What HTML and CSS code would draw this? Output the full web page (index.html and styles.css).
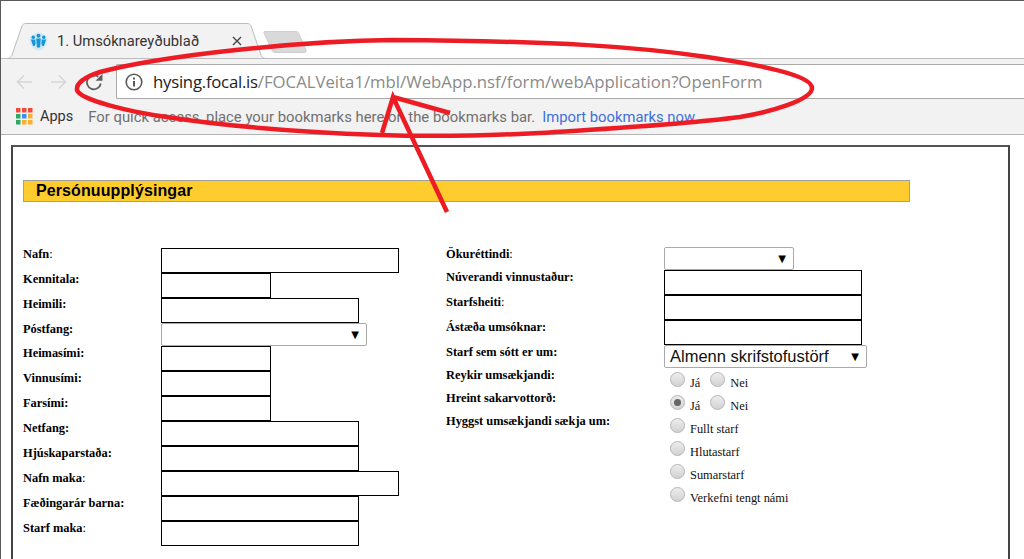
FILE: index.html
```html
<!DOCTYPE html>
<html lang="is">
<head>
<meta charset="utf-8">
<title>Umsóknareyðublað</title>
<link rel="stylesheet" href="styles.css">
</head>
<body>
<div class="window">
  <div class="tabstrip">
    <div class="tab">
      <svg class="tab-shape" width="260" height="36" viewBox="0 0 260 36"><path d="M0 35.500C3 35.500 4 34 5 32L15 3C16 1 17 .5 19 .5H240C242 .5 243 1 244 3L254 32C255 34 256 35.500 260 35.500Z" fill="#f2f2f2" stroke="#bcbcbc"/></svg>
      <svg class="favicon" width="19" height="19" viewBox="0 0 19 19"><path d="M9.500 .5C13 .5 14 2 15 3C17.500 3 18.500 5 18.500 7C18.500 12 15 18.500 9.500 18.500C4 18.500 .5 12 .5 7C.5 5 1.500 3 4 3C5 2 6 .5 9.500 .5Z" fill="#d4e8f2"/><g fill="#1496dc"><circle cx="9.500" cy="3.800" r="2"/><path d="M7.200 6.500h4.600l-.7 9h-3.200z"/><circle cx="4.300" cy="5.300" r="1.700"/><path d="M1.800 7.500h4.400l.4 4-.9 2.500H4.200z"/><circle cx="14.700" cy="5.300" r="1.700"/><path d="M12.800 7.500h4.400l-2.400 6.500h-1.500l-.9-2.500z"/></g></svg>
      <span class="tab-title">1. Umsóknareyðublað</span>
      <svg class="tab-close" width="10" height="10" viewBox="0 0 10 10"><path d="M1 1l8 8M9 1l-8 8" stroke="#444" stroke-width="1.400" fill="none"/></svg>
    </div>
    <svg class="newtab" width="44" height="22" viewBox="0 0 44 22"><path d="M1 2C.5 1 1 .5 2 .5H33C34 .5 35 1 35.500 2L43 19C43.500 20.500 43 21.500 41.500 21.500H12C11 21.500 10 21 9.500 20Z" fill="#d9d9d9" stroke="#cfcfcf"/></svg>
  </div>
  <div class="toolbar">
    <svg class="nav-icon nav-back" width="16" height="16" viewBox="0 0 16 16"><path d="M16 8H1.500M8 1.500L1.500 8 8 14.500" stroke="#d6d6d6" stroke-width="1.600" fill="none"/></svg>
    <svg class="nav-icon nav-forward" width="16" height="16" viewBox="0 0 16 16"><path d="M0 8h14.500M8 1.500L14.500 8 8 14.500" stroke="#d6d6d6" stroke-width="1.600" fill="none"/></svg>
    <svg class="nav-icon nav-reload" width="18" height="18" viewBox="0 0 18 18"><path d="M15.800 10.500A7 7 0 1 1 13.300 3.800" stroke="#5f5f5f" stroke-width="1.800" fill="none"/><path d="M10.500 7.800h7V.8z" fill="#5f5f5f"/></svg>
    <div class="omnibox">
      <svg width="18" height="18" viewBox="0 0 18 18"><circle cx="9" cy="9" r="7.800" stroke="#5a5a5a" stroke-width="1.600" fill="none"/><path d="M8 8h2v5.500H8zM8 4.500h2v2H8z" fill="#5a5a5a"/></svg>
      <span class="url"><span class="host">hysing.focal.is</span>/FOCALVeita1/mbl/WebApp.nsf/form/webApplication?OpenForm</span>
    </div>
  </div>
  <div class="bookmarks">
    <svg width="17" height="17" viewBox="0 0 17 17"><rect x="0" y="0" width="4.500" height="4.500" fill="#f04b3f"/><rect x="6" y="0" width="4.500" height="4.500" fill="#f04b3f"/><rect x="12" y="0" width="4.500" height="4.500" fill="#f04b3f"/><rect x="0" y="6" width="4.500" height="4.500" fill="#2fa866"/><rect x="6" y="6" width="4.500" height="4.500" fill="#3b8ff3"/><rect x="12" y="6" width="4.500" height="4.500" fill="#fbb02d"/><rect x="0" y="12" width="4.500" height="4.500" fill="#2fa866"/><rect x="6" y="12" width="4.500" height="4.500" fill="#fbb02d"/><rect x="12" y="12" width="4.500" height="4.500" fill="#fbb02d"/></svg>
    <span class="apps">Apps</span>
    <span class="hint">For quick access, place your bookmarks here on the bookmarks bar.</span>
    <span class="import">Import bookmarks now...</span>
  </div>
  <div class="page">
    <div class="formbox">
      <h1 class="section">Persónuupplýsingar</h1>
      <div class="columns">
        <div class="col col-left">
          <div class="row up"><span class="lbl">Nafn<i>:</i></span><div class="inp w-l"></div></div>
          <div class="row up"><span class="lbl">Kennitala:</span><div class="inp w-s"></div></div>
          <div class="row up"><span class="lbl">Heimili:</span><div class="inp w-m"></div></div>
          <div class="row row-sel up"><span class="lbl">Póstfang:</span><div class="sel w-sel1"><span class="arrow">▼</span></div></div>
          <div class="row"><span class="lbl">Heimasími:</span><div class="inp w-s"></div></div>
          <div class="row"><span class="lbl">Vinnusími:</span><div class="inp w-s"></div></div>
          <div class="row"><span class="lbl">Farsími:</span><div class="inp w-s"></div></div>
          <div class="row"><span class="lbl">Netfang:</span><div class="inp w-m"></div></div>
          <div class="row"><span class="lbl">Hjúskaparstaða:</span><div class="inp w-m"></div></div>
          <div class="row"><span class="lbl">Nafn maka<i>:</i></span><div class="inp w-l"></div></div>
          <div class="row"><span class="lbl">Fæðingarár barna:</span><div class="inp w-m"></div></div>
          <div class="row"><span class="lbl">Starf maka<i>:</i></span><div class="inp w-m"></div></div>
        </div>
        <div class="col col-right">
          <div class="row row-sel"><span class="lbl">Ökuréttindi<i>:</i></span><div class="sel w-sel2"><span class="arrow">▼</span></div></div>
          <div class="row"><span class="lbl">Núverandi vinnustaður:</span><div class="inp w-m"></div></div>
          <div class="row"><span class="lbl">Starfsheiti<i>:</i></span><div class="inp w-m"></div></div>
          <div class="row"><span class="lbl">Ástæða umsóknar:</span><div class="inp w-m"></div></div>
          <div class="row row-sel"><span class="lbl">Starf sem sótt er um:</span><div class="sel w-sel3"><span class="seltext">Almenn skrifstofustörf</span><span class="arrow">▼</span></div></div>
          <div class="row row-sel"><span class="lbl">Reykir umsækjandi:</span><div class="radios"><span class="radio"></span><span class="rt">Já</span><span class="radio"></span><span class="rt">Nei</span></div></div>
          <div class="row row-sel"><span class="lbl">Hreint sakarvottorð:</span><div class="radios"><span class="radio on"></span><span class="rt">Já</span><span class="radio"></span><span class="rt">Nei</span></div></div>
          <div class="row row-sel"><span class="lbl">Hyggst umsækjandi sækja um:</span><div class="radios"><span class="radio"></span><span class="rt">Fullt starf</span></div></div>
          <div class="row row-sel"><span class="lbl"></span><div class="radios"><span class="radio"></span><span class="rt">Hlutastarf</span></div></div>
          <div class="row row-sel"><span class="lbl"></span><div class="radios"><span class="radio"></span><span class="rt">Sumarstarf</span></div></div>
          <div class="row row-sel"><span class="lbl"></span><div class="radios"><span class="radio"></span><span class="rt">Verkefni tengt námi</span></div></div>
        </div>
      </div>
    </div>
  </div>
  <svg class="annotation" width="1024" height="559" viewBox="0 0 1024 559">
    <path d="M393 40C300 41 165 55 100 72C85 77 76 83 77 90C80 100 130 112 167 117C230 127 300 132 380 135C440 137 500 135 540 133C600 129 680 125 740 117C770 112 812 100 812 88C812 78 780 68 707 57C640 47 560 41 393 40Z" fill="none" stroke="#ed1c24" stroke-width="4.500"/>
    <path d="M382 133L393 97L447 212M393 97L450 113" fill="none" stroke="#ed1c24" stroke-width="4.500"/>
  </svg>
</div>
</body>
</html>
```
FILE: styles.css
```css
* { box-sizing: border-box; }
html, body { margin: 0; padding: 0; }
body { width: 1024px; height: 559px; overflow: hidden; background: #fff; font-family: "Liberation Serif", serif; }
.window { position: relative; width: 1024px; height: 559px; display: flex; flex-direction: column; border-top: 1px solid #5a5a5a; border-left: 1px solid #5a5a5a; overflow: hidden; }
.tabstrip { flex: none; height: 57px; background: #fff; display: flex; align-items: flex-end; padding-left: 6px; }
.tab { position: relative; width: 260px; height: 36px; display: flex; align-items: center; padding: 0 0 0 22px; margin-bottom: -1px; font: 14.700px "Roboto", sans-serif; color: #333; z-index: 1; }
.tab-shape { position: absolute; left: 0; top: 0; }
.favicon, .tab-title, .tab-close { position: relative; }
.favicon { flex: none; }
.tab-title { margin-left: 9px; width: 161px; white-space: nowrap; }
.tab-close { flex: none; margin-left: 14px; }
.newtab { flex: none; margin: 0 0 5px -4px; }
.toolbar { flex: none; height: 41px; background: #f2f2f2; border-top: 1px solid #bcbcbc; display: flex; align-items: center; padding: 5px 0 0 15px; }
.nav-icon { flex: none; }
.nav-forward { margin-left: 19px; }
.nav-reload { margin-left: 18px; }
.omnibox { flex: 1; height: 35px; margin-left: 13px; background: #fff; border: 1px solid #a9a9a9; border-right: none; border-radius: 2px 0 0 2px; display: flex; align-items: center; padding-left: 8px; gap: 10px; font: 16.750px "Open Sans", sans-serif; color: #8a8a8a; white-space: nowrap; }
.host { color: #222; letter-spacing: -.25px; }
.bookmarks { flex: none; height: 36px; background: #f2f2f2; border-bottom: 1px solid #b4b4b4; display: flex; align-items: center; padding-left: 15px; font: 14.500px "Roboto", sans-serif; white-space: nowrap; }
.apps { margin-left: 7px; color: #333; }
.hint { margin-left: 15px; color: #707070; font-size: 14.850px; }
.import { margin-left: 7px; color: #3f6fdc; font-size: 14.800px; }
.page { flex: 1; min-height: 0; padding: 10px 0 0 10px; background: #fff; }
.formbox { width: 999px; height: 420px; border: 2px solid #444; border-top-color: #555; border-bottom: none; padding: 33px 0 0 10px; }
.section { width: 887px; height: 22px; margin: 0; padding-left: 12px; background: #ffcc2e; border: 1px solid #a0a0a0; font: bold 16px/20px "Liberation Sans", sans-serif; letter-spacing: .1px; color: #000; }
.columns { display: flex; margin-top: 45px; }
.col { display: flex; flex-direction: column; }
.col-left { width: 423px; margin-top: 1px; }
.row { display: flex; flex: none; height: 25px; }
.row-sel { height: 23px; }
.lbl { width: 138px; flex: none; font: bold 12.400px/14px "Liberation Serif", serif; color: #000; }
.up .lbl { margin-top: -1px; }
.lbl i { font-style: normal; font-weight: normal; }
.col-right .lbl { width: 218px; }
.inp { height: 25px; border: 1px solid #000; background: #fff; }
.w-l { width: 238px; } .w-m { width: 198px; } .w-s { width: 110px; }
.sel { height: 23px; border: 1px solid #a9a9a9; border-radius: 2px; background: #fff; display: flex; align-items: center; padding: 0 7px 0 5px; }
.w-sel1 { width: 206px; } .w-sel2 { width: 130px; } .w-sel3 { width: 203px; }
.arrow { font: 10px "DejaVu Sans", sans-serif; color: #000; margin-left: auto; }
.seltext { font: 16.500px "Liberation Sans", sans-serif; color: #111; }
.radios { display: flex; align-items: flex-start; padding: 4px 0 0 6px; }
.radio { width: 15px; height: 15px; border-radius: 50%; border: 1px solid #b5b5b5; background: linear-gradient(#ededed, #d2d2d2); position: relative; flex: none; margin-right: 5px; }
.radio.on::after { content: ""; position: absolute; left: 3px; top: 3px; width: 7px; height: 7px; border-radius: 50%; background: #666; }
.rt { font: 12.400px/14px "Liberation Serif", serif; color: #111; margin-top: 4px; margin-right: 10px; }
.annotation { position: absolute; left: -1px; top: -1px; pointer-events: none; z-index: 2; }
```
